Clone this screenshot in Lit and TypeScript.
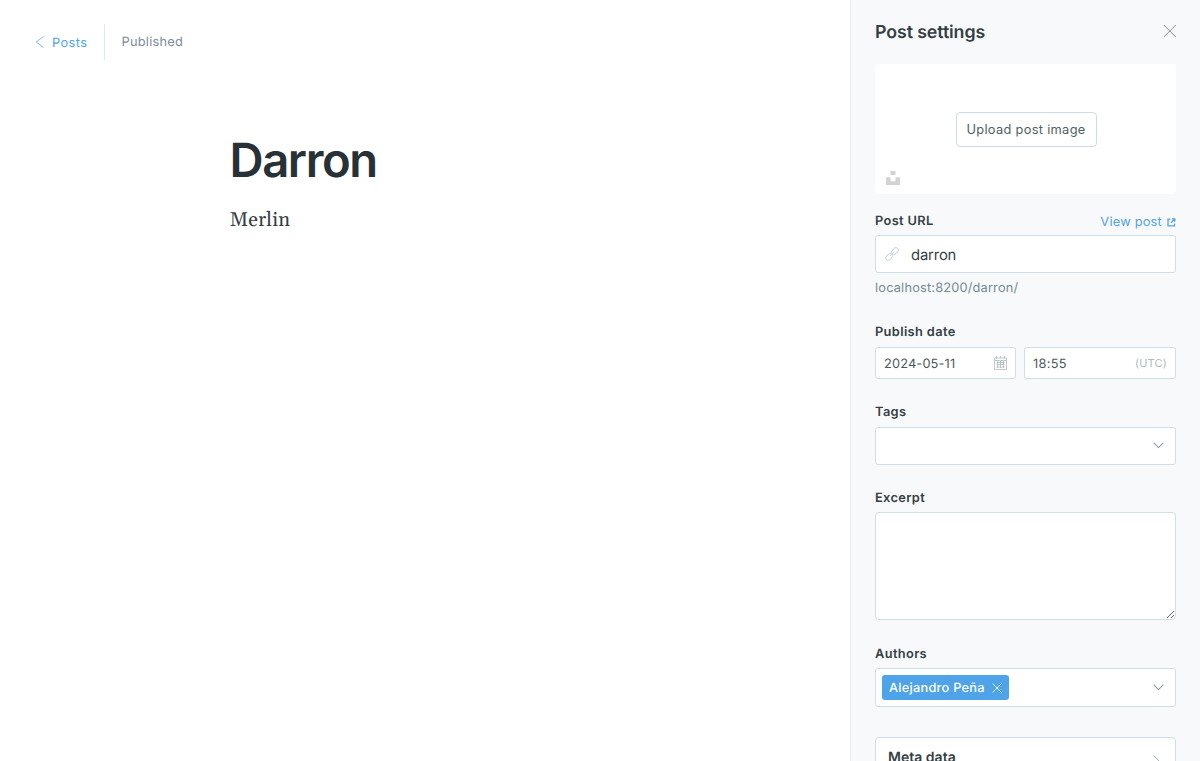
import { LitElement, html, css, svg } from "lit";
import { customElement, property } from "lit/decorators.js";

const chevron = svg`<path d="M1 1l4.500 4.700L10 1" fill="none" stroke="currentColor" stroke-width="1.1" stroke-linecap="round" stroke-linejoin="round"/>`;

@customElement("settings-field")
class SettingsField extends LitElement {
  @property() label = "";

  static styles = css`
    :host { display: block; }
    .head { display: flex; justify-content: space-between; height: 23px; line-height: 20px; }
    :host(.compact) .head { line-height: 18px; }
    .label { font-size: 12.800px; font-weight: 600; letter-spacing: 0.37px; color: #343f44; }
  `;

  render() {
    return html`
      <div class="head"><span class="label">${this.label}</span><slot name="action"></slot></div>
      <slot></slot>
    `;
  }
}

@customElement("app-root")
class AppRoot extends LitElement {
  static styles = css`
    :host {
      display: flex;
      width: 1200px;
      height: 761px;
      overflow: hidden;
      background: #fff;
      color: #343f44;
      font-family: Inter, "Liberation Sans", sans-serif;
      font-size: 12.800px;
      letter-spacing: 0.2px;
      text-rendering: geometricPrecision;
    }
    * { box-sizing: border-box; }
    svg { display: block; flex: none; }
    .editor { flex: 1; min-width: 0; }
    .topbar { display: flex; height: 36px; margin: 24px 0 0 35px; }
    .back { display: flex; align-items: center; gap: 8px; width: 70px; color: #4fa3e8; border-right: 1px solid #dfe9f1; letter-spacing: 0.4px; }
    .back span { padding-top: 2px; }
    .state { padding-left: 16.500px; line-height: 37px; color: #7c8b9a; letter-spacing: 0.25px; }
    .content { padding: 72px 0 0 230px; }
    h1 { margin: 0 0 0 -0.500px; font-size: 47.200px; line-height: 57px; font-weight: 600; letter-spacing: -1.4px; color: #283136; }
    .body { margin: 15px 0 0 -0.500px; font: 20px/32px Georgia, Gelasio, "Liberation Serif", serif; letter-spacing: 0.15px; color: #343f44; }
    .panel { width: 350px; padding: 0 24px; background: #f8f9fb; border-left: 1px solid #e3ecf4; overflow: hidden; }
    .title { display: flex; align-items: center; justify-content: space-between; height: 64px; }
    .title h2 { margin: 0; padding-top: 2px; font-size: 17.800px; line-height: 24px; font-weight: 600; letter-spacing: -0.1px; }
    .close { margin-bottom: 2px; }
    .image { display: grid; place-items: center; position: relative; height: 130px; padding-left: 1px; background: #fff; border-radius: 4px; }
    .upload { width: 141px; height: 35px; padding: 0; border: 1px solid #cfdae2; border-radius: 4px; background: #fff; color: #4d5f66; font: 400 12.800px Inter, sans-serif; letter-spacing: 0.32px; }
    .unsplash { position: absolute; left: 11px; bottom: 9px; }
    .url { margin-top: 18px; }
    .view { display: flex; align-items: center; gap: 5px; height: 21px; color: #4fa3e8; letter-spacing: 0.22px; }
    .view svg { margin-bottom: 1px; }
    .box { display: flex; align-items: center; background: #fff; border: 1px solid #cfdfea; border-radius: 3px; color: #4a575c; }
    .h38 { height: 38px; }
    .slug { padding-left: 9px; gap: 12px; font-size: 14.800px; letter-spacing: -0.15px; color: #343f44; }
    .slug span { padding-top: 2px; }
    .hint { height: 16px; margin: 8px 0 27px; line-height: 16px; color: #738a94; letter-spacing: 0.18px; }
    .row { display: flex; gap: 8px; }
    .date, .time { height: 32px; padding: 0 8px; justify-content: space-between; letter-spacing: 0.15px; }
    .value { padding-top: 2px; }
    .date { width: 141px; }
    .time { flex: 1; letter-spacing: 0.3px; }
    .zone { font-size: 11px; color: #afb9c0; letter-spacing: 0.2px; }
    .tags { margin-top: 25px; }
    .select { justify-content: space-between; padding: 0 11px 0 6px; color: #94a3ad; }
    .select > svg { margin-bottom: 1px; }
    .excerpt { margin-top: 24px; }
    textarea { display: block; width: 100%; height: 108px; margin: 0; padding: 8px; background: #fff; border: 1px solid #cfdfea; border-radius: 4px; outline: none; resize: vertical; }
    .authors { margin-top: 25px; }
    .h39 { height: 39px; }
    .token { display: flex; align-items: center; gap: 7px; height: 25px; width: 127px; padding-left: 7px; background: #4ea3e9; border-radius: 3px; color: #fff; font-weight: 500; letter-spacing: 0.24px; white-space: nowrap; }
    .token span { padding-top: 2px; }
    .meta { display: flex; justify-content: space-between; height: 62px; margin-top: 30px; padding: 11px 15px 0 12px; background: #fff; border: 1px solid #cfdfea; border-radius: 4px; font-size: 14px; line-height: 18px; font-weight: 600; letter-spacing: 0.02px; }
    .meta svg { margin-top: 6px; }
  `;

  render() {
    return html`
      <main class="editor">
        <header class="topbar">
          <a class="back">
            <svg width="9" height="12" viewBox="0 0 9 12"><path d="M8.500 .5L1.200 6 8.500 11.500" fill="none" stroke="#7fbcef" stroke-width="1"/></svg>
            <span>Posts</span>
          </a>
          <span class="state">Published</span>
        </header>
        <article class="content">
          <h1>Darron</h1>
          <p class="body">Merlin</p>
        </article>
      </main>
      <aside class="panel">
        <div class="title">
          <h2>Post settings</h2>
          <svg class="close" width="13" height="13" viewBox="0 0 13 13"><path d="M.8 0l12 12M12.800 0l-12 12" stroke="#6b757b" stroke-width=".8"/></svg>
        </div>
        <div class="image">
          <button class="upload">Upload post image</button>
          <svg class="unsplash" width="14" height="14" viewBox="0 0 14 14"><path d="M4.500 0h5v4h-5zM0 6.200h4.500v4h5v-4H14V14H0z" fill="#d3d3d3"/></svg>
        </div>

        <settings-field class="url" label="Post URL">
          <a slot="action" class="view">View post
            <svg width="9" height="9" viewBox="0 0 9 9" fill="none" stroke="#4fa3e8" stroke-width="1.3"><path d="M3.300 1.200H1V7.800h6.500V5.600M5 .9h2.800v2.800M7.500 1.200L4 4.700"/></svg>
          </a>
          <div class="box h38 slug">
            <svg width="14" height="14" viewBox="0 0 14 14" fill="none" stroke="#cbd8e1" stroke-width="1"><rect x="-3.900" y="-2.400" width="7.800" height="4.800" rx="2.400" transform="translate(4.200 9.800) rotate(-45)"/><rect x="-3.900" y="-2.400" width="7.800" height="4.800" rx="2.400" transform="translate(9.800 4.200) rotate(-45)"/><path d="M5 9l4-4"/></svg>
            <span>darron</span>
          </div>
        </settings-field>
        <div class="hint">localhost:8200/darron/</div>

        <settings-field class="compact" label="Publish date">
          <div class="row">
            <div class="box date"><span class="value">2024-05-11</span>
              <svg width="13" height="14" viewBox="0 0 13 14" fill="none" stroke="#aebbc3" stroke-width=".8"><path d="M.5 2h12v11.500H.5zM.5 4.500h12M2.500 6.500h8M2.500 8.500h8M2.500 11h8M3.500 5v7M6.500 5v7M9.500 5v7M2.500 0v3M6.500 0v2M10.500 0v3"/></svg>
            </div>
            <div class="box time"><span class="value">18:55</span><span class="zone">(UTC)</span></div>
          </div>
        </settings-field>

        <settings-field class="tags compact" label="Tags">
          <div class="box h38 select"><span></span><svg width="11" height="7" viewBox="0 0 11 7">${chevron}</svg></div>
        </settings-field>

        <settings-field class="excerpt" label="Excerpt"><textarea></textarea></settings-field>

        <settings-field class="authors" label="Authors">
          <div class="box h39 select">
            <span class="token"><span>Alejandro Peña</span>
              <svg width="10" height="10" viewBox="0 0 10 10"><path d="M.5.5l9 9M9.500.5l-9 9" stroke="#fff" stroke-width=".8"/></svg>
            </span>
            <svg width="11" height="7" viewBox="0 0 11 7">${chevron}</svg>
          </div>
        </settings-field>

        <div class="meta"><span>Meta data</span>
          <svg width="7" height="12" viewBox="0 0 7 12"><path d="M.5.5L6 6 .5 11.500" fill="none" stroke="#9fb0bb"/></svg>
        </div>
      </aside>
    `;
  }
}
